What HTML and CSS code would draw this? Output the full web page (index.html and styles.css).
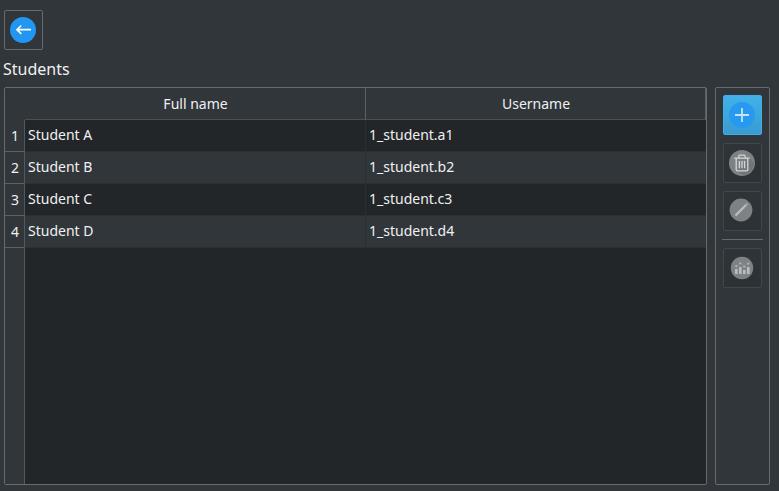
FILE: index.html
```html
<!DOCTYPE html>
<html lang="en">
<head>
<meta charset="utf-8">
<title>Students</title>
<link rel="stylesheet" href="styles.css">
</head>
<body>
<button class="btn back" aria-label="Back">
  <svg viewBox="0 0 39 40"><circle cx="19" cy="20" r="13" fill="#2196f3"/><path d="M27 19.7H13M17.3 15.5L13 19.7L17.3 23.9" fill="none" stroke="#fff" stroke-width="1.7"/></svg>
</button>
<h1 class="title">Students</h1>
<main class="content">
  <section class="frame">
    <div class="head"><span class="corner"></span><span class="col first">Full name</span><span class="col last">Username</span></div>
    <div class="row"><span class="num">1</span><span class="cell name">Student A</span><span class="cell">1_student.a1</span></div>
    <div class="row alt"><span class="num">2</span><span class="cell name">Student B</span><span class="cell">1_student.b2</span></div>
    <div class="row"><span class="num">3</span><span class="cell name">Student C</span><span class="cell">1_student.c3</span></div>
    <div class="row alt"><span class="num">4</span><span class="cell name">Student D</span><span class="cell">1_student.d4</span></div>
    <div class="rest"><span class="gutter"></span></div>
  </section>
  <aside class="panel">
    <button class="btn active" aria-label="Add">
      <svg viewBox="0 0 39 40"><circle cx="19" cy="20" r="13" fill="#2699f1"/><path d="M12 20H26M19 13V27" fill="none" stroke="#c5e3fa" stroke-width="1.8"/></svg>
    </button>
    <button class="btn disabled" aria-label="Delete">
      <svg viewBox="0 0 39 40"><circle cx="19" cy="20" r="13" fill="#7d8285"/><path d="M26 14.5L31 20A13 13 0 0 1 21 32.5L14 28Z" fill="#707578"/><g fill="none" stroke="#d3d5d6" stroke-width="1.3"><path d="M11.3 15.2H26.7M13.2 15.5V26.5Q13.2 27.8 14.5 27.8H23.5Q24.8 27.8 24.8 26.5V15.5M15.8 15V13.5Q15.8 12.2 17 12.2H21Q22.2 12.2 22.2 13.5V15"/><path d="M16.4 18V25.2M19 18V25.2M21.6 18V25.2"/></g></svg>
    </button>
    <button class="btn disabled" aria-label="Edit">
      <svg viewBox="0 0 39 40"><circle cx="18" cy="19" r="11.4" fill="#7d8285"/><path d="M12.4 24.6L23.2 13.8" stroke="#b9bdbf" stroke-width="2.2"/><path d="M22.6 14.4L24.4 12.6" stroke="#a4a9ab" stroke-width="2.4"/></svg>
    </button>
    <div class="separator"></div>
    <button class="btn disabled" aria-label="Statistics">
      <svg viewBox="0 0 39 40"><circle cx="19" cy="20" r="11.2" fill="#7d8285"/><path d="M12 21H14.6V26H12ZM16 19H18.6V26H16ZM20 22H22.6V26H20ZM24 19H26.6V26H24Z" fill="#b8bcbe"/><path d="M13.3 18.2L17.3 15.2L21.3 18.2L25.3 15.5" fill="none" stroke="#8e9396" stroke-width=".5"/><g fill="#b0b4b6"><circle cx="13.3" cy="18.2" r="1.1"/><circle cx="17.3" cy="15.3" r="1.1"/><circle cx="21.3" cy="18.6" r="1.1"/><circle cx="25.3" cy="15.7" r="1.1"/></g></svg>
    </button>
  </aside>
</main>
</body>
</html>
```
FILE: styles.css
```css
* { box-sizing: border-box; }
body {
  margin: 0;
  height: 491px;
  padding: 10px 9px 6px 4px;
  overflow: hidden;
  display: flex;
  flex-direction: column;
  background: #31363b;
  color: #eff0f1;
  font: 14px/20px "Noto Sans", sans-serif;
}
.btn {
  display: block;
  width: 39px;
  height: 40px;
  padding: 0;
  border: 1px solid #676b6f;
  border-radius: 2px;
  background: #31363b;
  flex: none;
}
.btn svg { display: block; width: 39px; height: 40px; margin: -1px; }
.btn.active { border-color: #3daee9; background: linear-gradient(#42b1ea, #399bd0); }
.btn.disabled { border-color: #42474b; background: linear-gradient(#2f3439, #2c3135); }
.title {
  margin: 7px 0 6px -1px;
  height: 24px;
  font-size: 16px;
  line-height: 24px;
  font-weight: 400;
}
.content { display: flex; gap: 8px; height: 398px; }
.frame {
  width: 703px;
  border: 1px solid #676b6f;
  border-radius: 2px;
  display: flex;
  flex-direction: column;
  background: #232629;
}
.head { display: flex; height: 32px; background: #31363b; }
.corner { width: 20px; }
.col {
  padding: 6px 0 0 1px;
  text-align: center;
  border-right: 1px solid #5c6165;
  border-bottom: 1px solid #4b5054;
}
.first { width: 341px; }
.last { flex: 1; }
.row { display: flex; height: 32px; }
.num {
  width: 20px;
  padding: 6px 0 0 1px;
  text-align: center;
  background: #31363b;
  border-right: 1px solid #53585c;
  border-bottom: 1px solid #5c6165;
}
.cell { flex: 1; padding: 5px 0 0 3px; border-bottom: 1px solid #2b2f33; }
.alt .cell { background: #31363b; }
.name { flex: 0 0 341px; border-right: 1px solid #2b2f33; }
.rest { flex: 1; display: flex; }
.gutter { width: 20px; background: #31363b; border-right: 1px solid #53585c; }
.panel {
  width: 55px;
  padding: 7px;
  border: 1px solid #676b6f;
  border-radius: 2px;
  display: flex;
  flex-direction: column;
  gap: 8px;
}
.separator { height: 1px; flex: none; margin: 0 -1px; background: #676b6f; }
```
